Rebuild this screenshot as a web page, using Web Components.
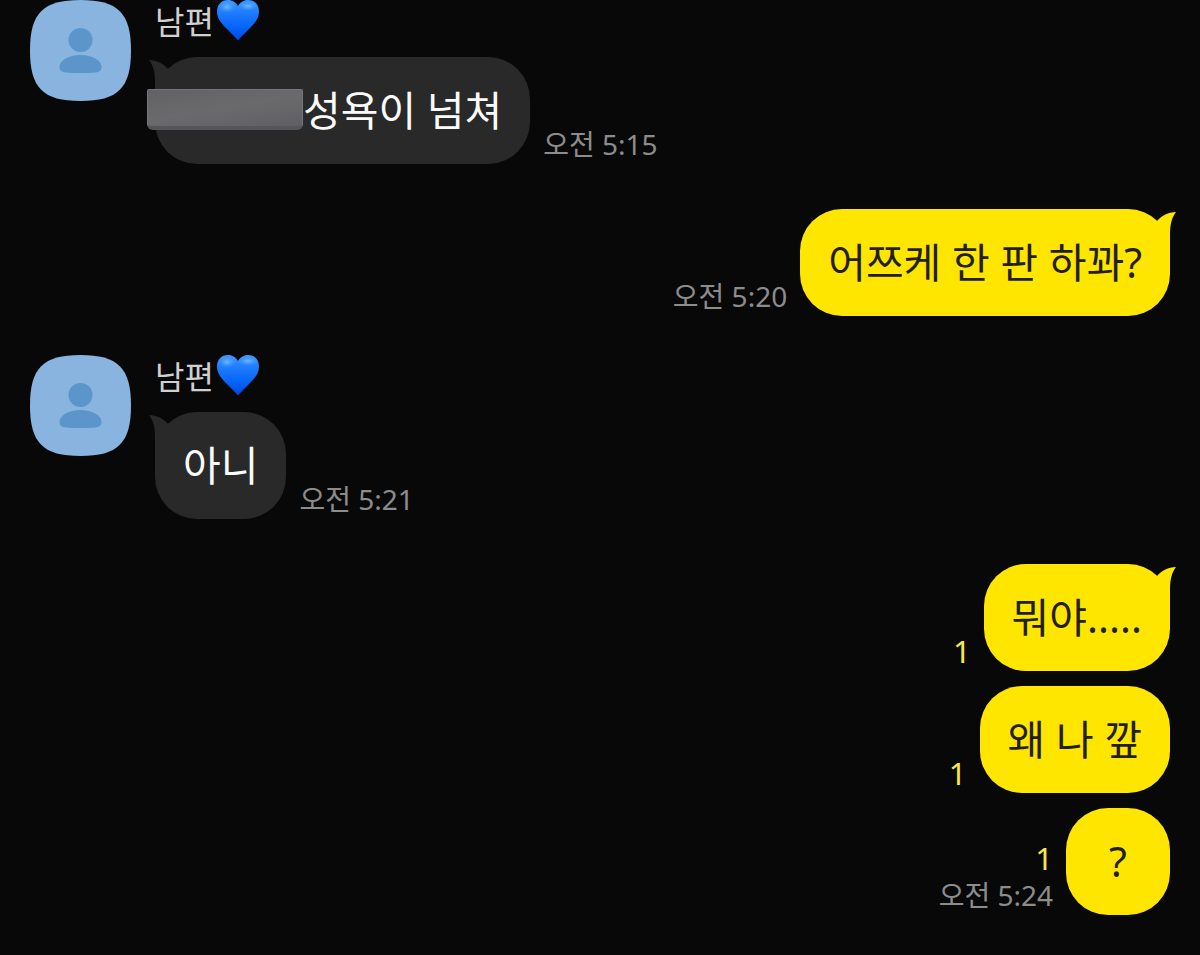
<!DOCTYPE html>
<html lang="ko">
<head>
  <meta charset="utf-8">
  <meta name="viewport" content="width=device-width, initial-scale=1">
  <title>남편</title>
  <style>
    body {
      margin: 0;
      background: #080808;
      font-family: "Noto Sans", "Noto Sans CJK KR", sans-serif;
    }
  </style>
</head>
<body>
  <chat-room>
    <chat-group name="남편">
      <chat-message tail time="오전 5:15"><redacted-text></redacted-text>성욕이 넘쳐</chat-message>
    </chat-group>
    <chat-group mine>
      <chat-message mine tail time="오전 5:20">어쯔케 한 판 하꽈?</chat-message>
    </chat-group>
    <chat-group name="남편">
      <chat-message tail time="오전 5:21">아니</chat-message>
    </chat-group>
    <chat-group mine>
      <chat-message mine tail unread="1">뭐야.....</chat-message>
      <chat-message mine unread="1">왜 나 깦</chat-message>
      <chat-message mine unread="1" time="오전 5:24">?</chat-message>
    </chat-group>
  </chat-room>

  <script>
    const roomTemplate = document.createElement('template')
    roomTemplate.innerHTML = `
      <style>
        :host {
          display: flex;
          flex-direction: column;
          gap: 39px;
          box-sizing: border-box;
          padding: 0 30px 39px;
        }
      </style>
      <slot></slot>
    `

    customElements.define(
      'chat-room',
      class extends HTMLElement {
        constructor() {
          super()
          this.attachShadow({ mode: 'open' }).appendChild(roomTemplate.content.cloneNode(true))
        }
      }
    )

    const avatarTemplate = document.createElement('template')
    avatarTemplate.innerHTML = `
      <style>
        :host {
          display: block;
          flex: none;
          width: 101px;
          height: 101px;
        }

        svg {
          display: block;
          width: 100%;
          height: 100%;
        }
      </style>
      <svg viewBox="0 0 101 101" aria-hidden="true">
        <path fill="#88b4df" d="M0 50.5C0 13 13 0 50.5 0S101 13 101 50.5 88 101 50.5 101 0 88 0 50.5Z"/>
        <circle cx="50.5" cy="40" r="12" fill="#5b95ca"/>
        <path fill="#5b95ca" d="M29.5 67C29.5 60 39 55 50.5 55S71.500 60 71.500 67C71.500 71 69 72 65.500 72.500Q50.500 73.500 35.500 72.500C32 72 29.500 71 29.500 67Z"/>
      </svg>
    `

    customElements.define(
      'user-avatar',
      class extends HTMLElement {
        constructor() {
          super()
          this.attachShadow({ mode: 'open' }).appendChild(avatarTemplate.content.cloneNode(true))
        }
      }
    )

    const heartTemplate = document.createElement('template')
    heartTemplate.innerHTML = `
      <style>
        :host {
          display: block;
          width: 42px;
          height: 41px;
        }

        svg {
          display: block;
        }
      </style>
      <svg width="42" height="41" viewBox="0 0 42 41" aria-hidden="true">
        <defs>
          <linearGradient id="body" x1="0" y1="0" x2="0" y2="1">
            <stop offset="0" stop-color="#3f97ff"/>
            <stop offset=".3" stop-color="#1f7dff"/>
            <stop offset=".65" stop-color="#0765fb"/>
            <stop offset="1" stop-color="#0046dc"/>
          </linearGradient>
          <radialGradient id="shine">
            <stop offset="0" stop-color="#8accff" stop-opacity=".7"/>
            <stop offset="1" stop-color="#4ba0ff" stop-opacity="0"/>
          </radialGradient>
        </defs>
        <path fill="url(#body)" d="M21 40.500C18.500 37.500 15.500 34.500 10.500 29.500C4 23 0 18.500 0 11.500C0 4.500 4.500 0 11 0C15.500 0 19 2.500 21 6C23 2.500 26.500 0 31 0C37.500 0 42 4.500 42 11.500C42 18.500 38 23 31.500 29.500C26.500 34.500 23.500 37.500 21 40.500Z"/>
        <ellipse cx="10" cy="7" rx="9" ry="6" fill="url(#shine)"/>
        <ellipse cx="31" cy="6" rx="10" ry="5" fill="url(#shine)"/>
      </svg>
    `

    customElements.define(
      'blue-heart',
      class extends HTMLElement {
        constructor() {
          super()
          this.attachShadow({ mode: 'open' }).appendChild(heartTemplate.content.cloneNode(true))
        }
      }
    )

    const groupTemplate = document.createElement('template')
    groupTemplate.innerHTML = `
      <style>
        :host {
          display: flex;
          align-items: flex-start;
          gap: 24px;
        }

        :host([mine]) {
          padding-top: 6px;
        }

        :host([mine]) user-avatar,
        :host([mine]) header {
          display: none;
        }

        .messages {
          flex: 1;
          min-width: 0;
          display: flex;
          flex-direction: column;
          gap: 15px;
        }

        header {
          display: flex;
          align-items: flex-start;
          gap: 3px;
          height: 42px;
          color: #d0d0d0;
          font-size: 32px;
          line-height: 44px;
        }
      </style>
      <user-avatar></user-avatar>
      <div class="messages">
        <header><span id="name"></span><blue-heart></blue-heart></header>
        <slot></slot>
      </div>
    `

    customElements.define(
      'chat-group',
      class extends HTMLElement {
        constructor() {
          super()
          this.attachShadow({ mode: 'open' }).appendChild(groupTemplate.content.cloneNode(true))
        }

        static get observedAttributes() {
          return ['name']
        }

        attributeChangedCallback(name, oldValue, newValue) {
          this.shadowRoot.querySelector('#name').textContent = newValue
        }
      }
    )

    const messageTemplate = document.createElement('template')
    messageTemplate.innerHTML = `
      <style>
        :host {
          --bubble: #292929;
          display: flex;
          align-items: flex-end;
          gap: 13px;
        }

        :host([mine]) {
          --bubble: #ffe600;
          flex-direction: row-reverse;
        }

        .bubble {
          position: relative;
          box-sizing: border-box;
          min-width: 104px;
          padding: 28px;
          border-radius: 42px;
          background: var(--bubble);
          color: #fafafa;
          font-size: 41px;
          line-height: 51px;
          text-align: center;
        }

        :host([mine]) .bubble {
          color: #241f0c;
        }

        /* The tail hangs over the outer top corner of the bubble */
        .tail {
          display: none;
          position: absolute;
          top: 0;
          left: -7px;
          fill: var(--bubble);
        }

        :host([tail]) .tail {
          display: block;
        }

        :host([mine]) .tail {
          left: auto;
          right: -7px;
          transform: scaleX(-1);
        }

        .meta {
          flex: none;
          display: flex;
          flex-direction: column;
          padding-bottom: 1px;
          color: #8c8c8c;
          font-size: 28px;
          line-height: 37px;
        }

        :host([mine]) .meta {
          align-items: flex-end;
        }

        #unread {
          color: #f8e84a;
          font-size: 31px;
        }

        .meta span:empty {
          display: none;
        }
      </style>
      <div class="bubble">
        <svg class="tail" width="32" height="42" viewBox="0 0 32 42" aria-hidden="true">
          <path d="M1 3C9 3.500 15 6 20 12L28 20V42H7V25C7 15 5 8 1 3Z"/>
        </svg>
        <slot></slot>
      </div>
      <div class="meta"><span id="unread"></span><span id="time"></span></div>
    `

    customElements.define(
      'chat-message',
      class extends HTMLElement {
        constructor() {
          super()
          this.attachShadow({ mode: 'open' }).appendChild(messageTemplate.content.cloneNode(true))
        }

        static get observedAttributes() {
          return ['time', 'unread']
        }

        attributeChangedCallback(name, oldValue, newValue) {
          this.shadowRoot.querySelector(`#${name}`).textContent = newValue
        }
      }
    )

    const redactedTemplate = document.createElement('template')
    redactedTemplate.innerHTML = `
      <style>
        :host {
          display: inline-block;
          box-sizing: border-box;
          width: 156px;
          height: 41px;
          margin-left: -36px;
          vertical-align: -4px;
          position: relative;
          border: 1px solid #77777b;
          border-bottom: 4px solid #55555b;
          border-radius: 2px 2px 6px 6px;
          background: linear-gradient(170deg, #626265, #6a6a6d 50%, #606063);
        }
      </style>
    `

    customElements.define(
      'redacted-text',
      class extends HTMLElement {
        constructor() {
          super()
          this.attachShadow({ mode: 'open' }).appendChild(redactedTemplate.content.cloneNode(true))
        }
      }
    )
  </script>
</body>
</html>
